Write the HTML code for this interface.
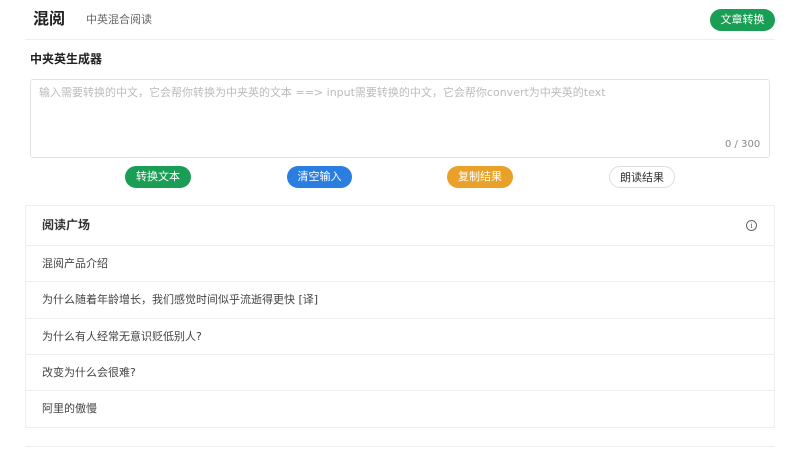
<!DOCTYPE html>
<html><head><meta charset="utf-8"><style>
*{margin:0;padding:0;box-sizing:border-box}
body{width:800px;height:450px;background:#fff;font-family:"DejaVu Sans","Noto Sans CJK SC",sans-serif;color:#333;position:relative;overflow:hidden}
.a{position:absolute;white-space:nowrap}
.btn{position:absolute;height:22px;border-radius:11px;color:#fff;font-size:11px;line-height:22px;text-align:center}
.row{position:absolute;left:26px;width:748px;height:36px;border-top:1px solid #eee;font-size:11px;line-height:36px;padding-left:16px;color:#444}
</style></head><body>
<div class="a" style="left:33px;top:8px;font-size:16px;font-weight:bold;color:#222;line-height:22px">混阅</div>
<div class="a" style="left:86px;top:12px;font-size:11px;color:#666;line-height:16px">中英混合阅读</div>
<div class="btn" style="left:710px;top:9px;width:65px;background:#1a9e55">文章转换</div>
<div class="a" style="left:25px;top:39px;width:750px;height:1px;background:#eee"></div>
<div class="a" style="left:30px;top:51px;font-size:12px;font-weight:bold;color:#222;line-height:16px">中夹英生成器</div>
<div class="a" style="left:30px;top:79px;width:740px;height:79px;border:1px solid #e2e2e2;border-radius:3px"></div>
<div class="a" style="left:39px;top:85px;font-size:11px;color:#bbb;line-height:16px">输入需要转换的中文，它会帮你转换为中夹英的文本 ==&gt; input需要转换的中文，它会帮你convert为中夹英的text</div>
<div class="a" style="left:725px;top:138px;font-size:10px;color:#888;line-height:14px">0 / 300</div>
<div class="btn" style="left:125px;top:166px;width:66px;background:#1a9e55">转换文本</div>
<div class="btn" style="left:287px;top:166px;width:65px;background:#2a7ee0">清空输入</div>
<div class="btn" style="left:447px;top:166px;width:66px;background:#e9a12a">复制结果</div>
<div class="btn" style="left:609px;top:166px;width:66px;background:#fff;color:#333;border:1px solid #ddd">朗读结果</div>
<div class="a" style="left:25px;top:205px;width:750px;height:223px;border:1px solid #eee;border-radius:2px"></div>
<div class="a" style="left:42px;top:217px;font-size:12px;font-weight:bold;color:#333;line-height:16px">阅读广场</div>
<div class="a" style="left:746px;top:220px;width:11px;height:11px;border:1px solid #666;border-radius:50%;font-size:8px;line-height:9px;text-align:center;color:#555;font-family:'Liberation Serif',serif">i</div>
<div class="row" style="top:245px">混阅产品介绍</div>
<div class="row" style="top:281px">为什么随着年龄增长，我们感觉时间似乎流逝得更快 [译]</div>
<div class="row" style="top:318px">为什么有人经常无意识贬低别人?</div>
<div class="row" style="top:354px">改变为什么会很难?</div>
<div class="row" style="top:390px">阿里的傲慢</div>
<div class="a" style="left:25px;top:446px;width:750px;height:1px;background:#eee"></div>
</body></html>
